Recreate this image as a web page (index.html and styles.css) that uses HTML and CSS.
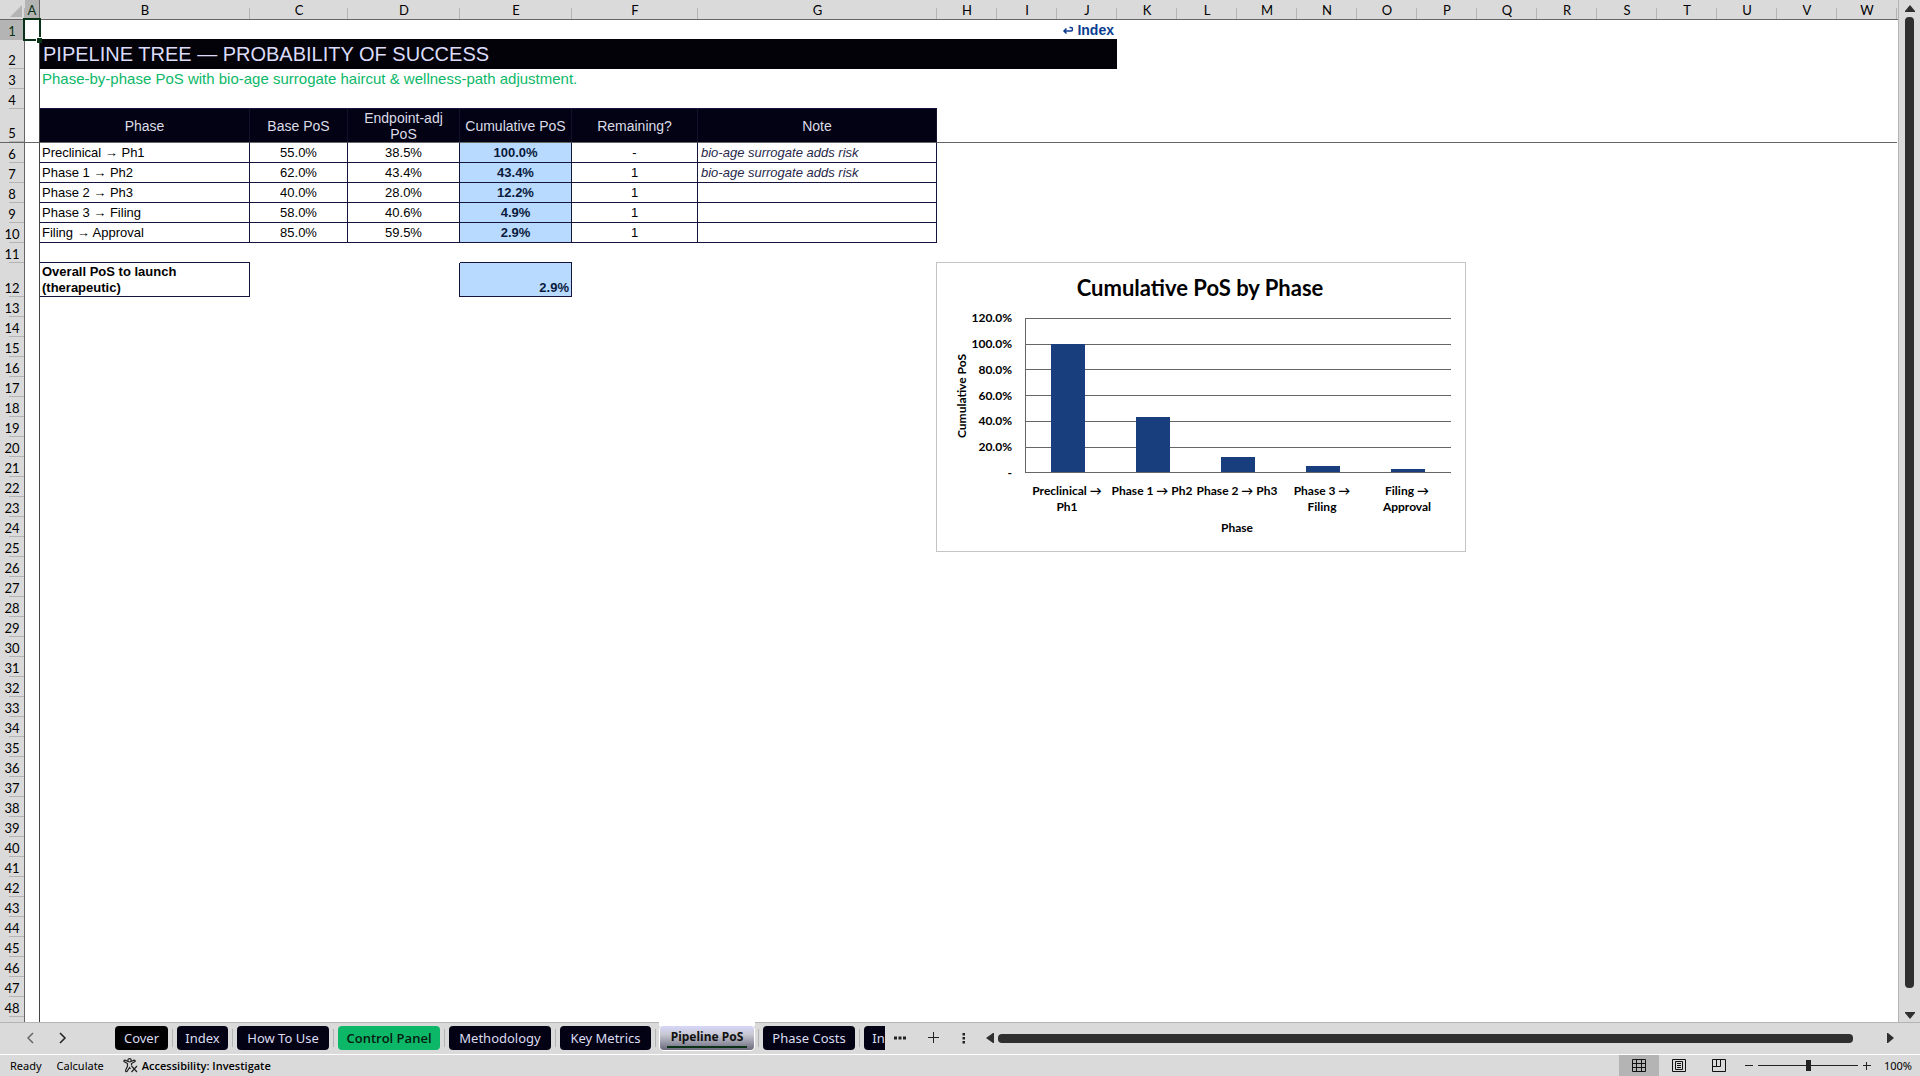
FILE: index.html
```html
<!DOCTYPE html>
<html lang="en">
<head>
    <meta charset="UTF-8">
    <meta name="viewport" content="width=device-width, initial-scale=1.0">
    <title>Pipeline PoS</title>
    <link rel="stylesheet" href="styles.css">
</head>
<body>
    <main class="workspace">
        <div class="sheet">
            <table class="grid">
                <colgroup>
                    <col class="col-rownum"><col class="col-a"><col class="col-b"><col class="col-c">
                    <col class="col-d"><col class="col-e"><col class="col-f"><col class="col-g">
                    <col class="col-std" span="16">
                </colgroup>
                <thead>
                    <tr class="letters">
                        <th class="corner"><svg width="12" height="12" viewBox="0 0 12 12"><path d="M12 0V12H0Z" fill="#b4b4b4"/></svg></th>
                        <th class="active">A</th><th>B</th><th>C</th><th>D</th><th>E</th><th>F</th><th>G</th>
                        <th>H</th><th>I</th><th>J</th><th>K</th><th>L</th><th>M</th><th>N</th><th>O</th>
                        <th>P</th><th>Q</th><th>R</th><th>S</th><th>T</th><th>U</th><th>V</th><th>W</th>
                    </tr>
                </thead>
                <tbody id="rows">
                    <tr>
                        <th class="active">1</th><td class="a selected"></td>
                        <td colspan="6"></td>
                        <td colspan="3" class="back"><a href="#index"><svg width="12" height="9" viewBox="0 0 12 9"><path d="M7.500 1.500H9Q10.500 1.500 10.500 3.200Q10.500 5 9 5H2M4.500 2.500L2 5L4.500 7.500" fill="none" stroke="currentColor" stroke-width="1.500"/></svg> Index</a></td>
                        <td colspan="13"></td>
                    </tr>
                    <tr class="title-row">
                        <th>2</th><td class="a"></td>
                        <td colspan="9" class="title">PIPELINE TREE — PROBABILITY OF SUCCESS</td>
                        <td colspan="13"></td>
                    </tr>
                    <tr>
                        <th>3</th><td class="a"></td>
                        <td colspan="22" class="subtitle">Phase-by-phase PoS with bio-age surrogate haircut &amp; wellness-path adjustment.</td>
                    </tr>
                    <tr>
                        <th>4</th><td class="a"></td><td colspan="6" class="above"></td><td colspan="16"></td>
                    </tr>
                    <tr class="tall frozen">
                        <th>5</th><td class="a"></td>
                        <td class="head">Phase</td>
                        <td class="head">Base PoS</td>
                        <td class="head">Endpoint-adj PoS</td>
                        <td class="head">Cumulative PoS</td>
                        <td class="head">Remaining?</td>
                        <td class="head">Note</td>
                        <td colspan="16"></td>
                    </tr>
                    <tr>
                        <th>6</th><td class="a"></td>
                        <td class="cell">Preclinical → Ph1</td>
                        <td class="cell num">55.0%</td>
                        <td class="cell num">38.5%</td>
                        <td class="cell num total">100.0%</td>
                        <td class="cell num">-</td>
                        <td class="cell note">bio-age surrogate adds risk</td>
                        <td colspan="16"></td>
                    </tr>
                    <tr>
                        <th>7</th><td class="a"></td>
                        <td class="cell">Phase 1 → Ph2</td>
                        <td class="cell num">62.0%</td>
                        <td class="cell num">43.4%</td>
                        <td class="cell num total">43.4%</td>
                        <td class="cell num">1</td>
                        <td class="cell note">bio-age surrogate adds risk</td>
                        <td colspan="16"></td>
                    </tr>
                    <tr>
                        <th>8</th><td class="a"></td>
                        <td class="cell">Phase 2 → Ph3</td>
                        <td class="cell num">40.0%</td>
                        <td class="cell num">28.0%</td>
                        <td class="cell num total">12.2%</td>
                        <td class="cell num">1</td>
                        <td class="cell note"></td>
                        <td colspan="16"></td>
                    </tr>
                    <tr>
                        <th>9</th><td class="a"></td>
                        <td class="cell">Phase 3 → Filing</td>
                        <td class="cell num">58.0%</td>
                        <td class="cell num">40.6%</td>
                        <td class="cell num total">4.9%</td>
                        <td class="cell num">1</td>
                        <td class="cell note"></td>
                        <td colspan="16"></td>
                    </tr>
                    <tr>
                        <th>10</th><td class="a"></td>
                        <td class="cell">Filing → Approval</td>
                        <td class="cell num">85.0%</td>
                        <td class="cell num">59.5%</td>
                        <td class="cell num total">2.9%</td>
                        <td class="cell num">1</td>
                        <td class="cell note"></td>
                        <td colspan="16"></td>
                    </tr>
                    <tr>
                        <th>11</th><td class="a"></td>
                        <td class="above"></td><td colspan="2"></td><td class="above"></td><td colspan="18"></td>
                    </tr>
                    <tr class="tall">
                        <th>12</th><td class="a"></td>
                        <td class="cell overall">Overall PoS to launch (therapeutic)</td>
                        <td></td><td class="before"></td>
                        <td class="cell total overall-value">2.9%</td>
                        <td colspan="18"></td>
                    </tr>
                </tbody>
            </table>

            <svg class="chart" width="530" height="290" viewBox="0 0 530 290" role="img" aria-label="Cumulative PoS by Phase">
                <text class="chart-title" x="264" y="34">Cumulative PoS by Phase</text>
                <g class="gridlines">
                    <path d="M89 56.500H515M89 82H515M89 107.500H515M89 133.500H515M89 159.500H515M89 185H515M89 210.500H515M89 56V211"/>
                </g>
                <g class="bars">
                    <rect x="115" y="82" width="34" height="128"/>
                    <rect x="200" y="155" width="34" height="55"/>
                    <rect x="285" y="195" width="34" height="15"/>
                    <rect x="370" y="204" width="34" height="6"/>
                    <rect x="455" y="207" width="34" height="3"/>
                </g>
                <g class="y-labels">
                    <text x="76" y="60">120.0%</text>
                    <text x="76" y="86">100.0%</text>
                    <text x="76" y="112">80.0%</text>
                    <text x="76" y="138">60.0%</text>
                    <text x="76" y="163">40.0%</text>
                    <text x="76" y="189">20.0%</text>
                    <text x="76" y="215">-</text>
                </g>
                <g class="x-labels">
                    <text x="131" y="233">Preclinical →</text>
                    <text x="131" y="249">Ph1</text>
                    <text x="216" y="233">Phase 1 → Ph2</text>
                    <text x="301" y="233">Phase 2 → Ph3</text>
                    <text x="386" y="233">Phase 3 →</text>
                    <text x="386" y="249">Filing</text>
                    <text x="471" y="233">Filing →</text>
                    <text x="471" y="249">Approval</text>
                    <text x="301" y="270">Phase</text>
                    <text transform="translate(30 134) rotate(-90)">Cumulative PoS</text>
                </g>
            </svg>
        </div>

        <div class="vscroll">
            <svg width="10" height="8" viewBox="0 0 10 8"><path d="M5 0L10 6V7H0V6Z" fill="#2f2f2f"/></svg>
            <div class="vthumb"></div>
            <svg width="10" height="8" viewBox="0 0 10 8"><path d="M0 0H10V1L5 7L0 1Z" fill="#2f2f2f"/></svg>
        </div>
    </main>

    <nav class="tabbar">
        <div class="tab-nav">
            <button class="icon-btn" aria-label="Previous sheet"><svg width="8" height="12" viewBox="0 0 8 12"><path d="M6 1L1 6L6 11" fill="none" stroke="#666" stroke-width="1.500"/></svg></button>
            <button class="icon-btn" aria-label="Next sheet"><svg width="8" height="12" viewBox="0 0 8 12"><path d="M1 1L6 6L1 11" fill="none" stroke="#222" stroke-width="1.500"/></svg></button>
        </div>
        <div class="tabs">
            <button class="tab cover">Cover</button>
            <button class="tab">Index</button>
            <button class="tab">How To Use</button>
            <button class="tab control">Control Panel</button>
            <button class="tab">Methodology</button>
            <button class="tab">Key Metrics</button>
            <button class="tab current"><span>Pipeline PoS</span></button>
            <button class="tab">Phase Costs</button>
            <button class="tab cut">In</button>
        </div>
        <div class="tab-tools">
            <button class="icon-btn" aria-label="More sheets"><svg width="12" height="4" viewBox="0 0 12 4"><path d="M0 0.500H3V3.500H0ZM4.500 0.500H7.500V3.500H4.500ZM9 0.500H12V3.500H9Z" fill="#222"/></svg></button>
            <button class="icon-btn" aria-label="New sheet"><svg width="12" height="12" viewBox="0 0 12 12"><path d="M5.500 0V11M0 5.500H11" stroke="#222"/></svg></button>
            <button class="icon-btn" aria-label="Resize"><svg width="4" height="12" viewBox="0 0 4 12"><path d="M0.500 1H3V3.500H0.500ZM0.500 5H3V7.500H0.500ZM0.500 9H3V11.500H0.500Z" fill="#222"/></svg></button>
        </div>
        <div class="hscroll">
            <svg width="8" height="10" viewBox="0 0 8 10"><path d="M8 0V10H7L0 5L7 0Z" fill="#2f2f2f"/></svg>
            <div class="hthumb"></div>
            <svg width="8" height="10" viewBox="0 0 8 10"><path d="M0 0V10H1L7 5L1 0Z" fill="#2f2f2f"/></svg>
        </div>
    </nav>

    <footer class="status">
        <span>Ready</span>
        <span>Calculate</span>
        <button class="access">
            <svg width="15" height="15" viewBox="0 0 15 15" fill="none" stroke="#222" stroke-width="1.200"><circle cx="6.500" cy="2.300" r="1.700"/><path d="M5 3.500L2 2.200Q0.500 2.300 1 3.600L4.500 5.500V8L2.500 12.500Q2.600 14 4 13.500L6.500 9.500L7.500 11M8 3.500L11 2.200Q12.700 2.300 12 3.600L8.500 5.500V7.500M8.500 8L14 14M14 8L8.500 14"/></svg>
            Accessibility: Investigate
        </button>
        <div class="views">
            <button class="view on" aria-label="Normal"><svg width="14" height="14" viewBox="0 0 14 14"><path d="M0.500 0.500H13.500V12.500H0.500ZM4.500 0.500V12.500M9.500 0.500V12.500M0.500 4.500H13.500M0.500 8.500H13.500" fill="none" stroke="#111"/></svg></button>
            <button class="view" aria-label="Page layout"><svg width="14" height="14" viewBox="0 0 14 14"><path d="M0.500 0.500H13.500V12.500H0.500ZM3.500 2.500H10.500V10.500H3.500ZM5 4.500H9M5 6.500H9M5 8.500H9" fill="none" stroke="#111"/></svg></button>
            <button class="view" aria-label="Page break preview"><svg width="14" height="14" viewBox="0 0 14 14"><path d="M0.500 0.500H13.500V12.500H0.500ZM0.500 7.500H8.500V0.500M4.500 0.500V7.500" fill="none" stroke="#111"/></svg></button>
        </div>
        <div class="zoom">
            <button class="icon-btn" aria-label="Zoom out"><svg width="8" height="8" viewBox="0 0 8 8"><path d="M0 3.500H8" stroke="#222"/></svg></button>
            <input type="range" class="slider" min="0" max="100" value="51" aria-label="Zoom">
            <button class="icon-btn" aria-label="Zoom in"><svg width="8" height="8" viewBox="0 0 8 8"><path d="M0 3.500H8M3.500 0V8" stroke="#222"/></svg></button>
            <span class="percent">100%</span>
        </div>
    </footer>

    <script>
        // Empty rows below the model
        const rows = document.getElementById('rows');
        for (let n = 13; n <= 49; n++) {
            const tr = document.createElement('tr');
            tr.innerHTML = '<th>' + (n < 49 ? n : '') + '</th><td class="a"></td><td colspan="22"></td>';
            rows.appendChild(tr);
        }
    </script>
</body>
</html>
```
FILE: styles.css
```css
* {
    box-sizing: border-box;
}
body {
    margin: 0;
    height: 100vh;
    display: flex;
    flex-direction: column;
    overflow: hidden;
    background-color: #dadada;
    color: #000;
    font-family: "Liberation Sans", Arial, sans-serif;
    font-size: 13px;
}
button {
    border: none;
    padding: 0;
    background: none;
    color: inherit;
    cursor: pointer;
}
svg {
    display: block;
}
.icon-btn {
    display: flex;
    align-items: center;
    justify-content: center;
}

/* sheet */
.workspace {
    flex: 1;
    min-height: 0;
    display: flex;
}
.sheet {
    flex: 1;
    min-width: 0;
    position: relative;
    overflow: hidden;
    background: linear-gradient(#dadada 19px, #666 19px, #666 20px, #fff 20px);
    border-right: 1px solid #b4b4b4;
}
.grid {
    width: 1897px;
    table-layout: fixed;
    border-collapse: separate;
    border-spacing: 0;
}
.col-rownum { width: 25px; }
.col-a { width: 15px; }
.col-b { width: 210px; }
.col-c { width: 98px; }
.col-d { width: 112px; }
.col-e { width: 112px; }
.col-f { width: 126px; }
.col-g { width: 239px; }
.col-std { width: 60px; }

.grid tr {
    height: 20px;
}
.grid .title-row {
    height: 29px;
}
.grid .tall {
    height: 34px;
}
.grid th, .grid td {
    padding: 0;
    line-height: 17px;
    white-space: nowrap;
}
.grid th {
    font-family: Lato, sans-serif;
    font-size: 13px;
    font-weight: normal;
    vertical-align: bottom;
    text-align: center;
    background: linear-gradient(#b4b4b4, #b4b4b4) right bottom / 15px 1px no-repeat #dadada;
    border-right: 1px solid #666;
}
.grid .letters th {
    height: 20px;
    padding: 2px 0 0;
    line-height: 17px;
    border-right: none;
    border-bottom: 1px solid #666;
    background: linear-gradient(#b4b4b4, #b4b4b4) right bottom / 1px 11px no-repeat #dadada;
}
.grid th.active, .grid .letters th.active {
    background: #b4b4b4;
    color: #0a3216;
}
.grid .letters .active {
    border-right: 1px solid #666;
}
.letters .corner svg {
    margin: 0 3px 2px auto;
}
.a {
    border-right: 1px solid #444;
}
.selected {
    position: relative;
}
.selected::before {
    content: "";
    position: absolute;
    inset: -2px -2px -1px -2px;
    border: 2px solid #0a3216;
}
.selected::after {
    content: "";
    position: absolute;
    right: -3px;
    bottom: -3px;
    width: 5px;
    height: 5px;
    background: #0a3216;
    border: 1px solid #fff;
    border-width: 1px 0 0 1px;
}
.grid .back {
    text-align: right;
    padding-right: 3px;
    font-size: 14px;
    font-weight: bold;
}
.back a {
    color: #0b3c91;
    text-decoration: none;
}
.back svg {
    display: inline-block;
}
.grid .title {
    background: #020208;
    color: #dcdcfa;
    font-size: 20px;
    line-height: 27px;
    padding-left: 3px;
    box-shadow: 0 -1px #020208;
}
.grid .subtitle {
    color: #0cb868;
    font-size: 15px;
    padding: 0 0 2px 2px;
}
.frozen th, .frozen td {
    border-bottom: 1px solid #666;
}
.grid .head {
    background: #020214;
    color: #dcdce6;
    font-size: 14px;
    text-align: center;
    white-space: normal;
    line-height: 16px;
    padding: 0 2px;
    border-right: 1px solid #12122a;
}
.grid .cell {
    border-right: 1px solid #14143c;
    border-bottom: 1px solid #14143c;
    padding-left: 2px;
}
.grid .num {
    text-align: center;
    padding-left: 0;
}
.grid .total {
    background: #b8daff;
    font-weight: bold;
    color: #0a1a3c;
}
.grid .note {
    font-style: italic;
    color: #28284a;
    padding-left: 3px;
}
.above {
    border-bottom: 1px solid #14143c;
}
.before {
    border-right: 1px solid #14143c;
}
.grid .overall {
    font-weight: bold;
    white-space: normal;
    line-height: 16px;
    padding-right: 40px;
}
.grid .overall-value {
    text-align: right;
    vertical-align: bottom;
    padding-right: 2px;
}

/* floating chart */
.chart {
    position: absolute;
    left: 936px;
    top: 262px;
    background: #fff;
    outline: 1px solid #c4c4c4;
    outline-offset: -1px;
    font-family: Lato, sans-serif;
    font-weight: bold;
    font-size: 12px;
}
.chart-title {
    font-size: 22px;
    text-anchor: middle;
}
.gridlines path {
    fill: none;
    stroke: #666;
    stroke-width: 1;
    shape-rendering: crispEdges;
}
.bars rect {
    fill: #183e7e;
}
.y-labels {
    text-anchor: end;
}
.x-labels {
    text-anchor: middle;
}

.vscroll {
    width: 21px;
    display: flex;
    flex-direction: column;
    align-items: center;
    gap: 4px;
    padding: 5px 0 2px;
}
.vthumb {
    flex: 1;
    width: 9px;
    margin-bottom: 20px;
    border-radius: 4px;
    background: #2f2f2f;
}

/* sheet tabs */
.tabbar {
    height: 32px;
    display: flex;
    align-items: center;
    padding-bottom: 1px;
    border-top: 1px solid #b4b4b4;
    font-family: "Noto Sans", sans-serif;
    font-size: 13px;
}
.tab-nav {
    width: 115px;
    display: flex;
    gap: 24px;
    padding-left: 27px;
}
.tabs {
    display: grid;
    grid-template-columns: 53px 51px 92px 102px 102px 91px 94px 92px 21px;
    gap: 9px;
}
.tab {
    position: relative;
    height: 24px;
    border-radius: 4px;
    background: #020214;
    color: #dcdcf0;
    font: inherit;
    white-space: nowrap;
}
.tab::after {
    content: "";
    position: absolute;
    right: -5px;
    top: 3px;
    width: 1px;
    height: 18px;
    background: #b4b4b4;
}
.cover {
    background: #000;
}
.control {
    background: #0cb868;
    color: #061a10;
    font-family: "Open Sans", sans-serif;
    font-weight: 600;
}
.current {
    background: linear-gradient(#d6d6fa, #c8c8d4 35%, #6a6a7c);
    color: #111;
    font-weight: bold;
    font-size: 12px;
    box-shadow: 0 0 0 1px #fff;
}
.current::before {
    content: "";
    position: absolute;
    left: -1px;
    right: -1px;
    top: -4px;
    height: 4px;
    background: #fff;
}
.current span {
    display: block;
    margin: 0 7px;
    line-height: 18px;
    border-bottom: 2px solid #0a3216;
}
.cut {
    border-radius: 4px 0 0 4px;
    padding-left: 8px;
    overflow: hidden;
}
.tab-tools {
    display: flex;
    align-items: center;
    gap: 22px;
    padding: 0 20px 0 9px;
}
.hscroll {
    flex: 1;
    display: flex;
    align-items: center;
    gap: 4px;
    padding-right: 25px;
}
.hthumb {
    flex: 1;
    height: 9px;
    margin-right: 30px;
    border-radius: 4px;
    background: #2f2f2f;
}

/* status bar */
.status {
    height: 22px;
    display: flex;
    align-items: center;
    gap: 15px;
    padding-left: 10px;
    border-top: 1px solid #fff;
    font-family: "Noto Sans", sans-serif;
    font-size: 11px;
}
.access {
    display: flex;
    align-items: center;
    gap: 4px;
    margin-left: 4px;
    font-family: "Open Sans", sans-serif;
    font-size: 11px;
    font-weight: 600;
}
.views {
    display: flex;
    margin-left: auto;
    align-self: stretch;
}
.view {
    width: 40px;
    display: flex;
    align-items: center;
    justify-content: center;
}
.on {
    background: #b4b4b4;
}
.zoom {
    display: flex;
    align-items: center;
    gap: 5px;
    padding-right: 8px;
    margin-left: -9px;
}
.slider {
    appearance: none;
    width: 100px;
    height: 11px;
    margin: 0;
    background: linear-gradient(#222, #222) center / 100% 1px no-repeat;
}
.slider::-webkit-slider-thumb {
    appearance: none;
    width: 5px;
    height: 11px;
    background: #222;
}
.percent {
    margin-left: 8px;
}
```
